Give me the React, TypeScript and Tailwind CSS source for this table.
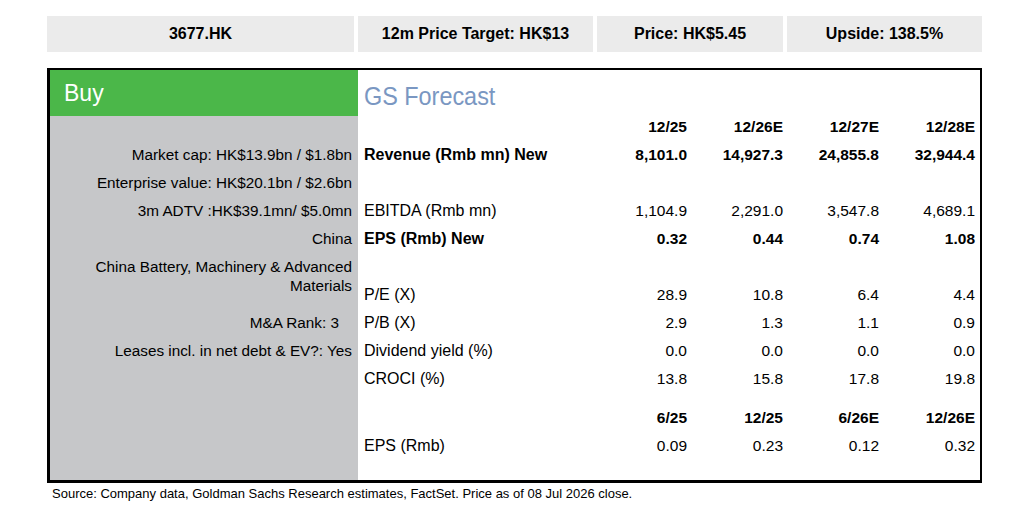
import React from "react";

const GREY = "bg-[#c6c7c9]";

type RowProps = {
  left?: React.ReactNode;
  label?: string;
  values?: string[];
  bold?: boolean;
  leftPad?: string;
};

// one line of the snapshot: grey descriptor cell on the left, forecast cells on the right
function Row({ left, label, values, bold, leftPad = "pr-[6px]" }: RowProps) {
  return (
    <div className="flex h-[28px]">
      <div className={`flex w-[308px] items-center justify-end ${GREY} ${leftPad} text-[15.3px]`}>
        {left}
      </div>
      <div className={`flex flex-1 items-center pr-[5px] ${bold ? "font-bold" : ""}`}>
        <div className="flex-1 pl-[6px] text-[16px]">{label}</div>
        {values?.map((v, i) => (
          <div key={i} className="w-[96px] text-right text-[15.5px]">
            {v}
          </div>
        ))}
      </div>
    </div>
  );
}

export default function App() {
  return (
    <div className="h-[524px] w-[1028px] bg-white font-['Liberation_Sans',Arial,sans-serif] text-black">
      <div className="pl-[47px] pt-[16px]">
        {/* header strip */}
        <div className="flex h-[36px] gap-[4px] text-[16px] font-bold">
          <div className="flex w-[307px] items-center justify-center bg-[#ebebeb]">3677.HK</div>
          <div className="flex w-[235px] items-center justify-center bg-[#ebebeb]">12m Price Target: HK$13</div>
          <div className="flex w-[186px] items-center justify-center bg-[#ebebeb]">Price: HK$5.45</div>
          <div className="flex w-[195px] items-center justify-center bg-[#ebebeb]">Upside: 138.5%</div>
        </div>

        {/* main box */}
        <div className="mt-[16px] flex h-[415px] w-[935px] flex-col border-t-2 border-r-2 border-b-[3px] border-l-[3px] border-black">
          <div className="flex h-[46px]">
            <div className="flex w-[308px] items-center bg-[#4bb749] pl-[14px] text-[23px] text-white">Buy</div>
            <div className="flex flex-1 items-end pb-[4px] pl-[6px]">
              <span className="origin-left scale-x-90 text-[26px] leading-[32px] text-[#7a97c2]">GS Forecast</span>
            </div>
          </div>

          <div className="flex h-[22px]">
            <div className={`w-[308px] ${GREY}`} />
            <div className="flex flex-1 items-center pr-[5px] text-[15.5px] font-bold">
              <div className="flex-1" />
              <div className="w-[96px] text-right">12/25</div>
              <div className="w-[96px] text-right">12/26E</div>
              <div className="w-[96px] text-right">12/27E</div>
              <div className="w-[96px] text-right">12/28E</div>
            </div>
          </div>
          <div className="flex h-[3px]">
            <div className={`w-[308px] ${GREY}`} />
          </div>

          <Row
            left="Market cap: HK$13.9bn / $1.8bn"
            label="Revenue (Rmb mn) New"
            values={["8,101.0", "14,927.3", "24,855.8", "32,944.4"]}
            bold
          />
          <Row left="Enterprise value: HK$20.1bn / $2.6bn" />
          <Row
            left="3m ADTV :HK$39.1mn/ $5.0mn"
            label="EBITDA (Rmb mn)"
            values={["1,104.9", "2,291.0", "3,547.8", "4,689.1"]}
          />
          <Row left="China" label="EPS (Rmb) New" values={["0.32", "0.44", "0.74", "1.08"]} bold />

          <div className="flex h-[56px]">
            <div className={`w-[308px] ${GREY} pt-[4px] pr-[6px] text-right text-[15.3px] leading-[19px]`}>
              China Battery, Machinery &amp; Advanced
              <br />
              Materials
            </div>
            <div className="flex flex-1 items-end pr-[5px]">
              <div className="flex h-[28px] flex-1 items-center">
                <div className="flex-1 pl-[6px] text-[16px]">P/E (X)</div>
                {["28.9", "10.8", "6.4", "4.4"].map((v) => (
                  <div key={v} className="w-[96px] text-right text-[15.5px]">
                    {v}
                  </div>
                ))}
              </div>
            </div>
          </div>

          <Row left="M&A Rank: 3" label="P/B (X)" values={["2.9", "1.3", "1.1", "0.9"]} leftPad="pr-[19px]" />
          <Row
            left="Leases incl. in net debt & EV?: Yes"
            label="Dividend yield (%)"
            values={["0.0", "0.0", "0.0", "0.0"]}
          />
          <Row label="CROCI (%)" values={["13.8", "15.8", "17.8", "19.8"]} />
          <div className="flex h-[11px]">
            <div className={`w-[308px] ${GREY}`} />
          </div>
          <Row values={["6/25", "12/25", "6/26E", "12/26E"]} bold />
          <Row label="EPS (Rmb)" values={["0.09", "0.23", "0.12", "0.32"]} />
          <div className="flex flex-1">
            <div className={`w-[308px] ${GREY}`} />
          </div>
        </div>

        <div className="mt-[3px] pl-[5px] text-[13px] leading-[16px]">
          Source: Company data, Goldman Sachs Research estimates, FactSet. Price as of 08 Jul 2026 close.
        </div>
      </div>
    </div>
  );
}
